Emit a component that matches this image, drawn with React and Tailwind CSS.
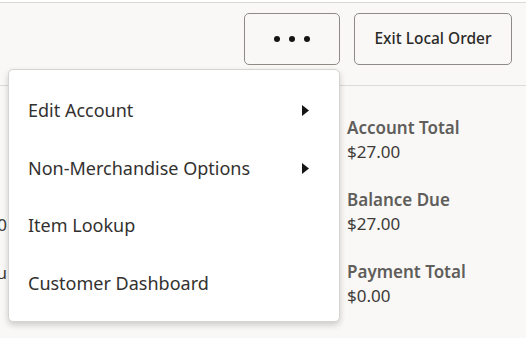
import React from 'react';

const menuItems = [
  { label: 'Edit Account', sub: true },
  { label: 'Non-Merchandise Options', sub: true },
  { label: 'Item Lookup', sub: false },
  { label: 'Customer Dashboard', sub: false },
];

const totals = [
  { label: 'Account Total', value: '$27.00' },
  { label: 'Balance Due', value: '$27.00' },
  { label: 'Payment Total', value: '$0.00' },
];

const Caret = () => (
  <svg width="7" height="11" viewBox="0 0 7 11" className="shrink-0">
    <path d="M0 0 L7 5.5 L0 11 Z" fill="#161513" />
  </svg>
);

export default function App() {
  return (
    <div
      className="w-[526px] h-[338px] overflow-hidden bg-[#f9f8f6] text-[#161513] flex flex-col"
      style={{ fontFamily: '"Noto Sans", "Open Sans", sans-serif' }}
    >
      {/* Header */}
      <div className="h-[2px] bg-white shrink-0" />
      <div className="h-[84px] shrink-0 border-t border-b border-[#dcdad7] flex items-start justify-end gap-[14px] pt-[10px] pr-[14px]">
        <div className="relative">
          <button className="w-[96px] h-[52px] rounded-[5px] border border-[#8e8b87] bg-[#f9f8f6] flex items-center justify-center gap-[9px]">
            <span className="w-[6px] h-[6px] rounded-full bg-[#161513]" />
            <span className="w-[6px] h-[6px] rounded-full bg-[#161513]" />
            <span className="w-[6px] h-[6px] rounded-full bg-[#161513]" />
          </button>

          {/* Dropdown */}
          <div className="absolute right-0 top-[56px] w-[332px] bg-white rounded-[5px] border border-[#d6d4d0] shadow-[0_3px_6px_rgba(0,0,0,0.18)] pt-[12px] pb-[9px] z-10">
            {menuItems.map((item) => (
              <div key={item.label} className="h-[57.5px] flex items-center justify-between pl-[19px] pr-[30px] text-[18px] text-[#33312f]">
                <span>{item.label}</span>
                {item.sub && <Caret />}
              </div>
            ))}
          </div>
        </div>
        <button className="w-[158px] h-[52px] rounded-[5px] border border-[#8e8b87] bg-[#f9f8f6] text-[15.5px] font-medium text-[#2b2a28]">
          Exit Local Order
        </button>
      </div>

      {/* Content */}
      <div className="flex-1 flex">
        <div className="w-[7px] overflow-hidden flex flex-col items-end pt-[127px] gap-[24px] text-[17px] text-[#3d3b38] leading-[24px]">
          <div className="whitespace-nowrap">$27.00</div>
          <div className="whitespace-nowrap">Tax Du</div>
        </div>
        <div className="ml-[340px] pt-[30px] flex flex-col gap-[24px]">
          {totals.map((t) => (
            <div key={t.label} className="leading-[24px] text-[17px]">
              <div className="font-semibold text-[#605e5b]">{t.label}</div>
              <div className="text-[#3d3b38]">{t.value}</div>
            </div>
          ))}
        </div>
      </div>
    </div>
  );
}
